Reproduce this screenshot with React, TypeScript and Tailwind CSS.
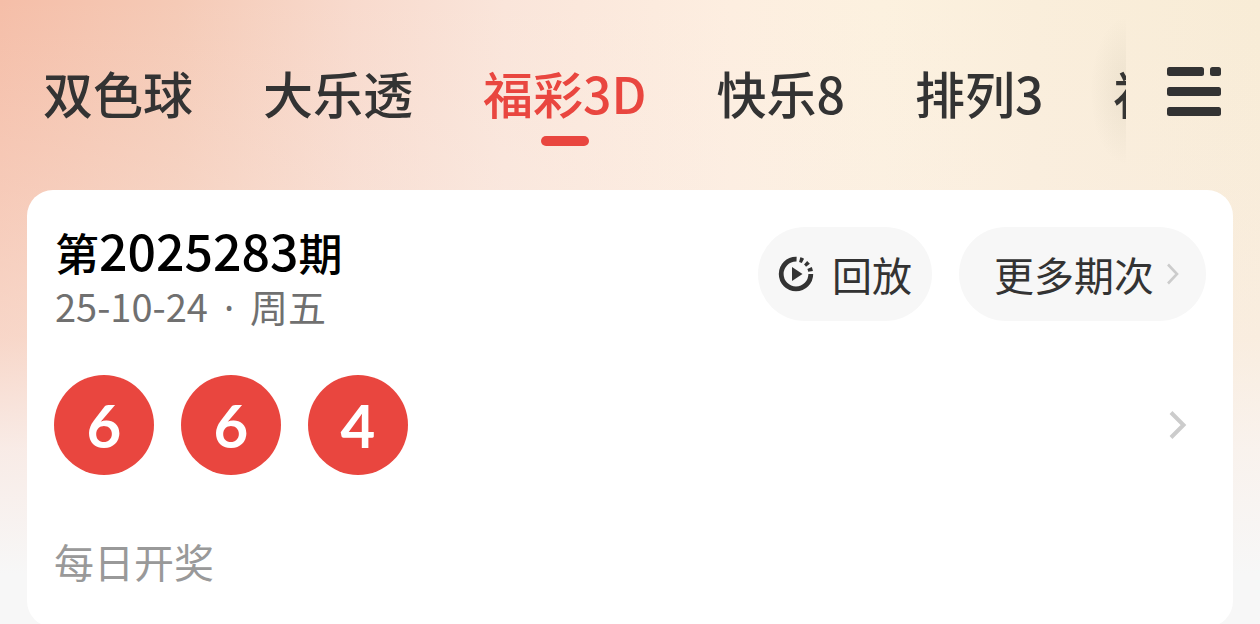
import React from "react";

const tabs = [
  { label: "双色球", active: false },
  { label: "大乐透", active: false },
  { label: "福彩3D", active: true },
  { label: "快乐8", active: false },
  { label: "排列3", active: false },
  { label: "福", active: false },
];

const balls = [6, 6, 4];

function MenuIcon() {
  return (
    <svg width="54" height="50" viewBox="0 0 54 50" fill="#333333" aria-hidden="true">
      <rect x="0" y="0" width="37" height="9" rx="2.5" />
      <rect x="43" y="0" width="11" height="9" rx="2.5" />
      <rect x="0" y="20" width="54" height="9" rx="2.5" />
      <rect x="0" y="40" width="54" height="9" rx="2.5" />
    </svg>
  );
}

function ReplayIcon() {
  return (
    <svg width="36" height="36" viewBox="0 0 36 36" fill="none" aria-hidden="true">
      <path d="M18 3.2A14.8 14.8 0 1 0 32.8 18" stroke="#333333" strokeWidth="4.8" />
      <path
        d="M18 3.2A14.8 14.8 0 0 1 32.8 18"
        stroke="#333333"
        strokeWidth="4.8"
        strokeDasharray="3.4 3.2"
        strokeDashoffset="-3.8"
      />
      <path d="M14 11L24.5 18L14 25Z" fill="#333333" />
    </svg>
  );
}

export default function App() {
  return (
    <div className="h-screen overflow-hidden bg-[#f7f7f7] bg-[linear-gradient(to_bottom,rgba(250,240,236,0)_0%,rgba(250,238,232,0.25)_30%,rgba(250,238,232,0.5)_54%,rgba(249,243,241,0.85)_72%,rgba(247,247,247,1)_92%),linear-gradient(to_right,#f5bea8_0%,#f5cab6_14%,#f8dacd_28%,#fae5da_40%,#fdeee0_58%,#fcf1df_70%,#faeedb_82%,#f8ecd6_100%)] font-['Noto_Sans_CJK_SC',sans-serif]">
      <header className="flex h-[190px] items-start">
        <nav className="relative flex h-full min-w-0 flex-1 gap-[70px] overflow-hidden pl-[43px] pt-14">
          {tabs.map((tab, i) => (
            <button
              key={i}
              type="button"
              className={
                tab.active
                  ? "flex shrink-0 flex-col items-center self-start whitespace-nowrap text-[50px] leading-[72px] font-medium text-[#e9463f]"
                  : "shrink-0 self-start whitespace-nowrap text-[50px] leading-[72px] font-medium text-[#333333]"
              }
            >
              {tab.label}
              {tab.active && <span className="mt-2 h-2.5 w-12 rounded-full bg-[#e9463f]" />}
            </button>
          ))}
          <span className="pointer-events-none absolute top-4 right-0 h-[150px] w-9 bg-[radial-gradient(ellipse_at_right,rgba(90,90,60,0.08),rgba(90,90,60,0)_70%)]" />
        </nav>
        <div className="mt-[67px] w-[134px] shrink-0 pl-[41px]">
          <button type="button" aria-label="全部彩种" className="block">
            <MenuIcon />
          </button>
        </div>
      </header>

      <main className="mx-[27px] h-[437px] rounded-[26px] bg-white px-[27px] pt-[37px]">
        <div className="flex items-start justify-between">
          <div className="pl-px">
            <h1 className="flex items-baseline text-[44px] leading-[44px] font-medium text-black">
              第<span className="text-[50px]">2025283</span>期
            </h1>
            <p className="text-[38px] leading-[64px] text-[#707070]">
              25-10-24<span className="mx-4 font-['Noto_Sans',sans-serif]">·</span>周五
            </p>
          </div>
          <div className="flex gap-[27px]">
            <button
              type="button"
              className="flex h-[94px] items-center gap-[18px] rounded-full bg-[#f7f7f7] px-5 text-[40px] leading-none text-[#333333]"
            >
              <ReplayIcon />
              回放
            </button>
            <button
              type="button"
              className="flex h-[94px] items-center gap-3 rounded-full bg-[#f7f7f7] pr-6 pl-[35px] text-[40px] leading-none text-[#333333]"
            >
              更多期次
              <svg width="16" height="22" viewBox="0 0 16 22" fill="none" aria-hidden="true">
                <path d="M2 1.5L11 11L2 20.5" stroke="#cccccc" strokeWidth="2.6" />
              </svg>
            </button>
          </div>
        </div>

        <div className="mt-9 flex items-center justify-between">
          <div className="flex gap-[27px]">
            {balls.map((n, i) => (
              <span
                key={i}
                className="flex size-[100px] items-center justify-center rounded-full bg-[#e9463f] font-['Lato',sans-serif] text-[60px] leading-none font-bold text-white"
              >
                {n}
              </span>
            ))}
          </div>
          <button type="button" aria-label="查看详情" className="mr-[18px]">
            <svg width="20" height="30" viewBox="0 0 20 30" fill="none" aria-hidden="true">
              <path d="M3 2.5L15.5 15L3 27.5" stroke="#cccccc" strokeWidth="4" />
            </svg>
          </button>
        </div>

        <p className="mt-14 text-[40px] leading-[60px] text-[#999999]">每日开奖</p>
      </main>
    </div>
  );
}
